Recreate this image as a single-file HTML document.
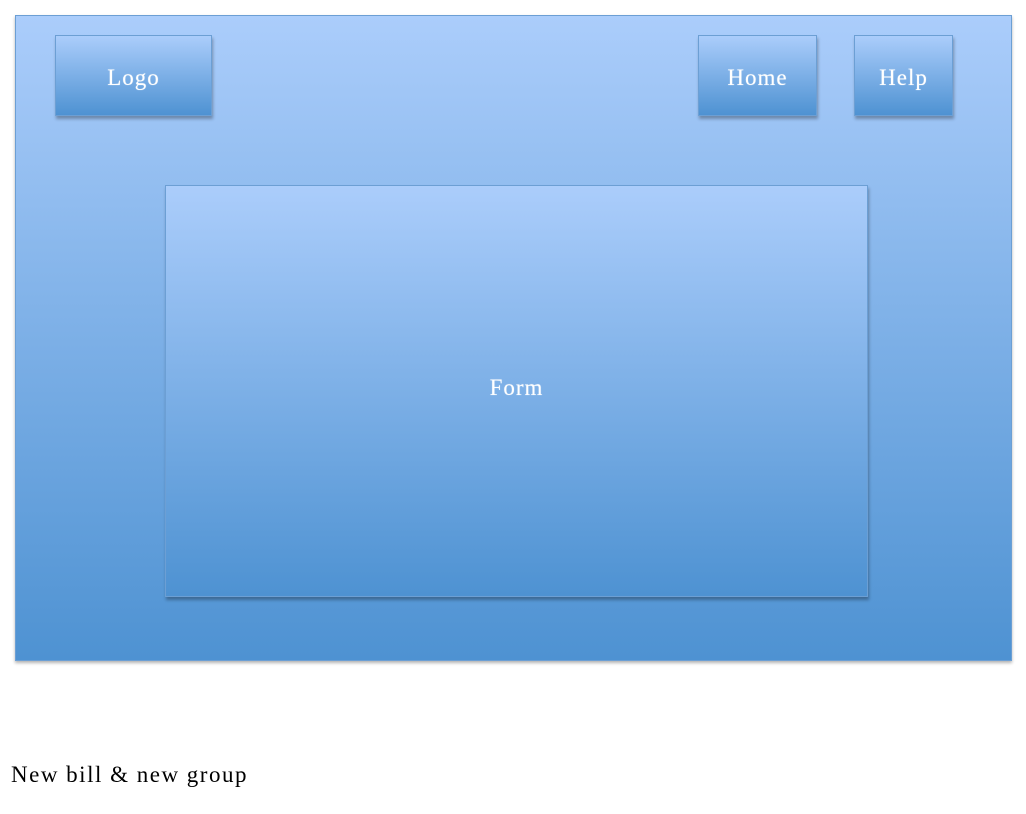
<!DOCTYPE html>
<html><head><style>
body{margin:0;width:1026px;height:814px;background:#fff;position:relative;overflow:hidden;font-family:"Liberation Serif",serif}
.b{position:absolute;box-sizing:border-box;background:linear-gradient(#abcdfb,#4e92d2);border:1px solid #6c9fd4;box-shadow:1px 3px 3px rgba(0,0,0,.3);color:#fff;display:flex;align-items:center;justify-content:center;font-size:23px;letter-spacing:1px;text-shadow:0 0 1px rgba(255,255,255,.6)}
</style></head><body>
<div class="b" style="left:15px;top:15px;width:997px;height:646px;box-shadow:0 2px 3px rgba(0,0,0,.3)"></div>
<div class="b" style="left:55px;top:35px;width:157px;height:81px;padding-top:4px">Logo</div>
<div class="b" style="left:698px;top:35px;width:119px;height:81px;padding-top:4px">Home</div>
<div class="b" style="left:854px;top:35px;width:99px;height:81px;padding-top:4px">Help</div>
<div class="b" style="left:165px;top:185px;width:703px;height:412px;padding-bottom:6px">Form</div>
<div style="position:absolute;left:11px;top:762px;font-size:23px;letter-spacing:1.5px;color:#000">New bill &amp; new group</div>
</body></html>
